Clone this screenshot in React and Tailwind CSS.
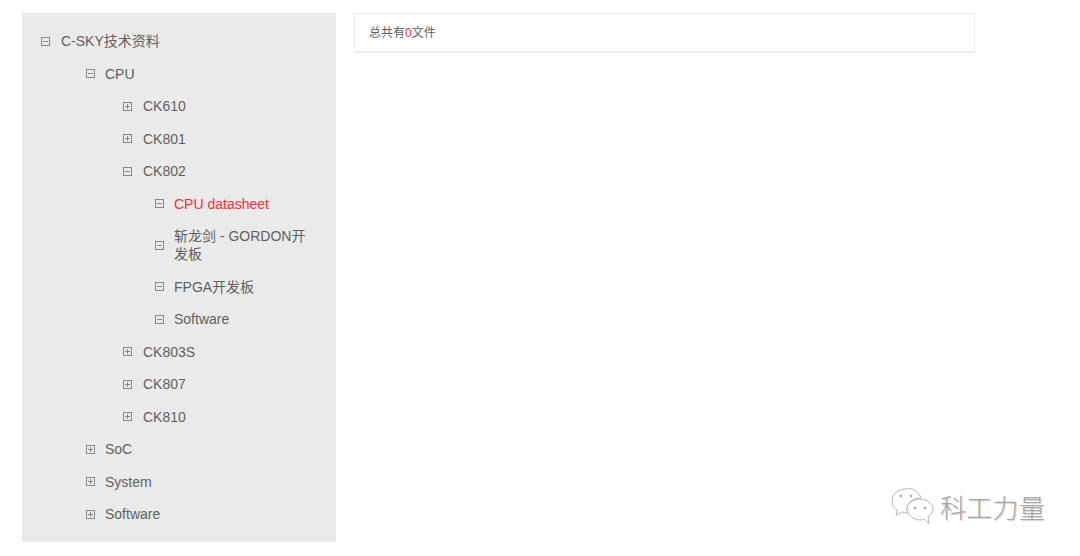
import React from 'react'

// tree data, indent = icon left offset inside the panel, gap = icon to text
const TREE = [
  { label: 'C-SKY技术资料', open: true, indent: 19, gap: 11 },
  { label: 'CPU', open: true, indent: 64, gap: 10 },
  { label: 'CK610', indent: 101, gap: 11 },
  { label: 'CK801', indent: 101, gap: 11 },
  { label: 'CK802', open: true, indent: 101, gap: 11 },
  { label: 'CPU datasheet', open: true, indent: 133, gap: 10, active: true },
  { label: '斩龙剑 - GORDON开发板', open: true, indent: 133, gap: 10 },
  { label: 'FPGA开发板', open: true, indent: 133, gap: 10 },
  { label: 'Software', open: true, indent: 133, gap: 10 },
  { label: 'CK803S', indent: 101, gap: 11 },
  { label: 'CK807', indent: 101, gap: 11 },
  { label: 'CK810', indent: 101, gap: 11 },
  { label: 'SoC', indent: 64, gap: 10 },
  { label: 'System', indent: 64, gap: 10 },
  { label: 'Software', indent: 64, gap: 10 },
]

const ToggleIcon = ({ open }) => (
  <svg width="9" height="9" viewBox="0 0 9 9" className="shrink-0 text-[#888]" fill="none" stroke="currentColor">
    <rect x="0.5" y="0.5" width="8" height="8" />
    <path d="M2 4.5H7" />
    {!open && <path d="M4.5 2V7" />}
  </svg>
)

const Row = ({ item }) => (
  <div className="flex items-center py-[7.25px] pr-[30px]" style={{ paddingLeft: item.indent }}>
    <ToggleIcon open={item.open} />
    <span
      className={`text-sm leading-[18px] ${item.active ? 'text-[#f5303a]' : 'text-[#606060]'}`}
      style={{ marginLeft: item.gap }}
    >
      {item.label}
    </span>
  </div>
)

const WechatMark = () => (
  <svg width="43" height="38" viewBox="0 0 43 38" fill="#fff" stroke="#b5b5b5" strokeWidth="1">
    <path d="M15 1C7 1 1 6 1 13c0 4 2 7 5 9l-1 5 6-3c1 0 3 1 5 1h1c-1-1-1-3-1-4 0-6 6-11 14-11-2-6-8-10-15-10z" />
    <path d="M29 11c-7 0-13 5-13 10s6 11 13 11c2 0 3 0 4-1l5 5-1-7c3-2 5-5 5-8 0-5-6-10-13-10z" />
    <circle cx="10" cy="8" r="1.2" fill="#aaa" stroke="none" />
    <circle cx="20" cy="8" r="1.2" fill="#aaa" stroke="none" />
    <circle cx="24" cy="20" r="1.2" fill="#aaa" stroke="none" />
    <circle cx="34" cy="20" r="1.2" fill="#aaa" stroke="none" />
  </svg>
)

export default function App() {
  return (
    <div className="relative h-[556px] w-[1080px] overflow-hidden bg-white font-['Liberation_Sans','Noto_Sans_CJK_SC',sans-serif]">
      <div className="flex items-start gap-[18px] pl-[22px] pt-[13px]">
        {/* Tree */}
        <div className="h-[529px] w-[314px] shrink-0 bg-[#eaeaea] pt-[12px]">
          {TREE.map((item, i) => (
            <Row key={item.label + i} item={item} />
          ))}
        </div>

        {/* File count */}
        <div className="flex h-[40px] w-[621px] items-center border border-b-2 border-[#eeeeee] pl-[14px] text-xs text-[#606060]">
          总共有<span className="text-[#f5303a]">0</span>文件
        </div>
      </div>

      {/* Watermark */}
      <div className="absolute left-[891px] top-[488px] flex items-center gap-[6px]">
        <WechatMark />
        <span className="mt-[4px] text-[26px] font-light leading-none tracking-[0.3px] text-[#a6a6a6] [text-shadow:1px_1px_1px_#d5d5d5]">
          科工力量
        </span>
      </div>
    </div>
  )
}
